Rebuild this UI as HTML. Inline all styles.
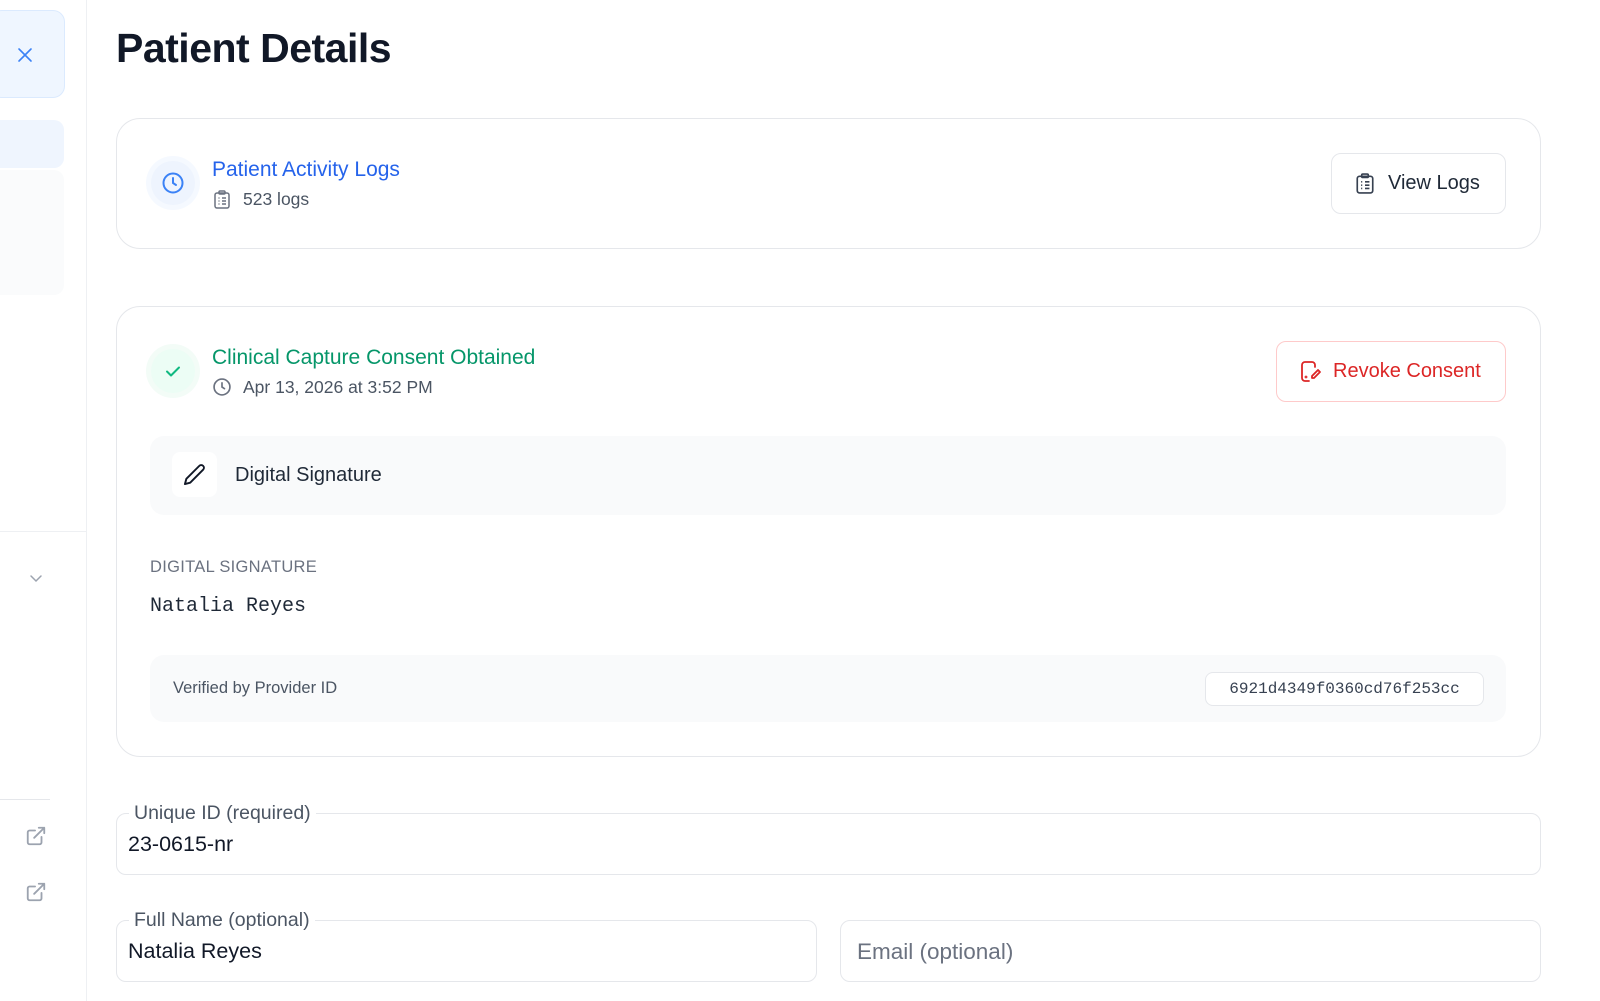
<!DOCTYPE html>
<html><head><meta charset="utf-8"><style>
*{box-sizing:border-box;margin:0;padding:0}
body{width:1600px;height:1001px;overflow:hidden;background:#fff;font-family:"Liberation Sans",sans-serif;position:relative;color:#111827}
.a{position:absolute}
.card{position:absolute;border:1px solid #e5e7eb;border-radius:24px;background:#fff}
.mono{font-family:"Liberation Mono",monospace}
fieldset{position:absolute;border:1px solid #e5e7eb;border-radius:10px;padding:0 12px}
legend{font-size:19.5px;color:#4b5563;padding:0 5px;margin-left:0}
</style></head><body>
<div class="a" style="left:0;top:0;width:87px;height:1001px;border-right:1px solid #eef0f3"></div>
<div class="a" style="left:-10px;top:10px;width:75px;height:88px;background:#eff6ff;border:1px solid #dbeafe;border-radius:12px"></div>
<svg class="a" style="left:16px;top:46px" width="18" height="18" viewBox="0 0 18 18"><path d="M3 3L15 15M15 3L3 15" stroke="#3b82f6" stroke-width="1.6" stroke-linecap="round"/></svg>
<div class="a" style="left:-10px;top:120px;width:74px;height:48px;background:#eff5fe;border-radius:10px"></div>
<div class="a" style="left:-10px;top:170px;width:74px;height:125px;background:#fafbfc;border-radius:10px"></div>
<div class="a" style="left:0;top:531px;width:87px;height:1px;background:#eef0f3"></div>
<svg class="a" style="left:28px;top:573px" width="16" height="12" viewBox="0 0 16 12"><path d="M3 3l5 5 5-5" stroke="#9ca3af" stroke-width="1.5" fill="none" stroke-linecap="round"/></svg>
<div class="a" style="left:0;top:799px;width:50px;height:1px;background:#e5e7eb"></div>
<svg class="a" style="left:25px;top:825px" width="22" height="22" viewBox="0 0 24 24" fill="none" stroke="#9ca3af" stroke-width="2" stroke-linecap="round" stroke-linejoin="round"><path d="M18 13v6a2 2 0 0 1-2 2H5a2 2 0 0 1-2-2V8a2 2 0 0 1 2-2h6M15 3h6v6M10 14L21 3"/></svg>
<svg class="a" style="left:25px;top:881px" width="22" height="22" viewBox="0 0 24 24" fill="none" stroke="#9ca3af" stroke-width="2" stroke-linecap="round" stroke-linejoin="round"><path d="M18 13v6a2 2 0 0 1-2 2H5a2 2 0 0 1-2-2V8a2 2 0 0 1 2-2h6M15 3h6v6M10 14L21 3"/></svg>

<div class="a" style="left:116px;top:25px;font-size:41px;font-weight:bold;color:#111827;letter-spacing:-0.5px">Patient Details</div>

<div class="card" style="left:116px;top:118px;width:1425px;height:131px"></div>
<div class="a" style="left:146px;top:156px;width:54px;height:54px;border-radius:50%;background:#f5f9ff"></div>
<div class="a" style="left:151px;top:161px;width:44px;height:44px;border-radius:50%;background:#eef4fe"></div>
<svg class="a" style="left:161px;top:171px" width="24" height="24" viewBox="0 0 24 24" fill="none" stroke="#3b82f6" stroke-width="2" stroke-linecap="round"><circle cx="12" cy="12" r="9.5"/><path d="M12 7v5l3 2"/></svg>
<div class="a" style="left:212px;top:158px;font-size:21px;color:#2563eb">Patient Activity Logs</div>
<svg class="a" style="left:213px;top:190px" width="18" height="19" viewBox="0 0 18 19" fill="none" stroke="#6b7280" stroke-width="1.5"><rect x="2" y="3" width="14" height="15" rx="2"/><rect x="6" y="1" width="6" height="3" rx="1"/><path d="M5.5 8h1M9 8h4M5.5 11h1M9 11h4M5.5 14h1M9 14h4"/></svg>
<div class="a" style="left:243px;top:189px;font-size:17.5px;color:#4b5563">523 logs</div>
<div class="a" style="left:1331px;top:153px;width:175px;height:61px;border:1px solid #e5e7eb;border-radius:10px"></div>
<svg class="a" style="left:1355px;top:173px" width="20" height="21" viewBox="0 0 18 19" fill="none" stroke="#374151" stroke-width="1.5"><rect x="2" y="3" width="14" height="15" rx="2"/><rect x="6" y="1" width="6" height="3" rx="1"/><path d="M5.5 8h1M9 8h4M5.5 11h1M9 11h4M5.5 14h1M9 14h4"/></svg>
<div class="a" style="left:1388px;top:172px;font-size:20px;color:#1f2937">View Logs</div>

<div class="card" style="left:116px;top:306px;width:1425px;height:451px"></div>
<div class="a" style="left:146px;top:344px;width:54px;height:54px;border-radius:50%;background:#f3fcf7"></div>
<div class="a" style="left:151px;top:349px;width:44px;height:44px;border-radius:50%;background:#ecfdf5"></div>
<svg class="a" style="left:163px;top:361px" width="20" height="20" viewBox="0 0 20 20" fill="none" stroke="#10b981" stroke-width="2" stroke-linecap="round" stroke-linejoin="round"><path d="M4 10.5l4 4 8-8"/></svg>
<div class="a" style="left:212px;top:346px;font-size:21px;color:#059669">Clinical Capture Consent Obtained</div>
<svg class="a" style="left:212px;top:377px" width="20" height="20" viewBox="0 0 24 24" fill="none" stroke="#6b7280" stroke-width="2" stroke-linecap="round"><circle cx="12" cy="12" r="9.5"/><path d="M12 7v5l3 2"/></svg>
<div class="a" style="left:243px;top:377px;font-size:17.5px;color:#4b5563">Apr 13, 2026 at 3:52 PM</div>
<div class="a" style="left:1276px;top:341px;width:230px;height:61px;border:1px solid #fecaca;border-radius:10px"></div>
<svg class="a" style="left:1300px;top:360px" width="22" height="23" viewBox="0 0 22 23" fill="none" stroke="#dc2626" stroke-width="1.8" stroke-linecap="round" stroke-linejoin="round"><path d="M15 7V5a3 3 0 0 0-3-3H5a3 3 0 0 0-3 3v13a3 3 0 0 0 3 3h4"/><path d="M18 10l2 2-6 6h-2v-2z"/><circle cx="6" cy="17" r=".5"/></svg>
<div class="a" style="left:1333px;top:360px;font-size:20px;color:#dc2626">Revoke Consent</div>
<div class="a" style="left:150px;top:436px;width:1356px;height:79px;background:#f9fafb;border-radius:14px"></div>
<div class="a" style="left:172px;top:452px;width:45px;height:45px;background:#fff;border-radius:8px"></div>
<svg class="a" style="left:183px;top:463px" width="23" height="23" viewBox="0 0 24 24" fill="none" stroke="#111827" stroke-width="2" stroke-linecap="round" stroke-linejoin="round"><path d="M17 3a2.8 2.8 0 0 1 4 4L7.5 20.5 2 22l1.5-5.5Z"/></svg>
<div class="a" style="left:235px;top:464px;font-size:20px;color:#1f2937">Digital Signature</div>
<div class="a" style="left:150px;top:558px;font-size:16.5px;color:#6b7280;letter-spacing:.3px">DIGITAL SIGNATURE</div>
<div class="a mono" style="left:150px;top:595px;font-size:20px;color:#1f2937">Natalia Reyes</div>
<div class="a" style="left:150px;top:655px;width:1356px;height:67px;background:#f9fafb;border-radius:14px"></div>
<div class="a" style="left:173px;top:679px;font-size:16.5px;color:#4b5563">Verified by Provider ID</div>
<div class="a mono" style="left:1205px;top:672px;width:279px;height:34px;background:#fff;border:1px solid #e5e7eb;border-radius:8px;font-size:16px;color:#374151;text-align:center;line-height:32px">6921d4349f0360cd76f253cc</div>

<fieldset style="left:116px;top:802px;width:1425px;height:73px"><legend>Unique ID (required)</legend></fieldset>
<div class="a" style="left:128px;top:832px;font-size:21.5px;color:#111827">23-0615-nr</div>
<fieldset style="left:116px;top:909px;width:701px;height:73px"><legend>Full Name (optional)</legend></fieldset>
<div class="a" style="left:128px;top:939px;font-size:21.5px;color:#111827">Natalia Reyes</div>
<div class="a" style="left:840px;top:920px;width:701px;height:62px;border:1px solid #e5e7eb;border-radius:10px"></div>
<div class="a" style="left:857px;top:939px;font-size:22.5px;color:#6b7280">Email (optional)</div>
</body></html>
